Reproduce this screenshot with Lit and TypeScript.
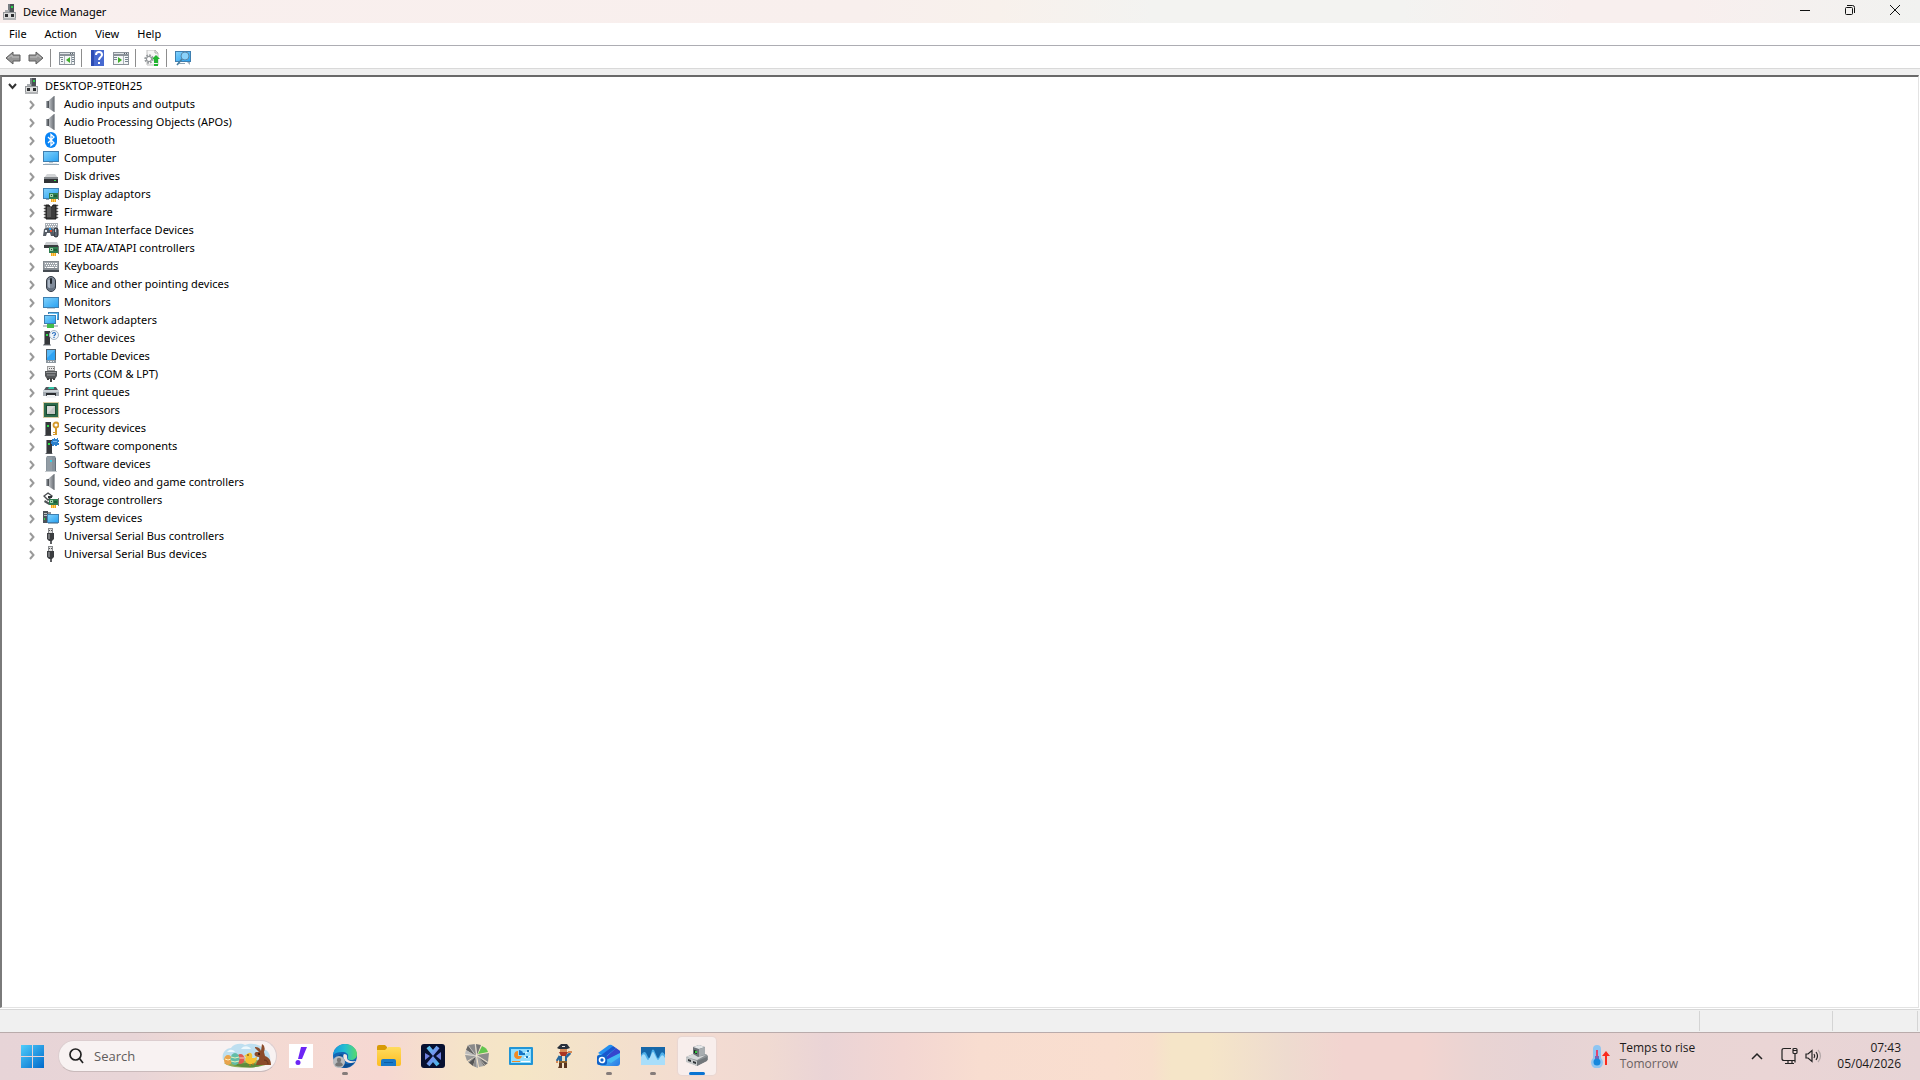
import { LitElement, html, css, svg, TemplateResult } from "lit";
import { customElement, state } from "lit/decorators.js";

const monitor = (x: number, y: number, w: number, h: number) => svg`
  <rect x=${x} y=${y} width=${w} height=${h} fill="#3f7fb0"/>
  <rect x=${x + 1} y=${y + 1} width=${w - 2} height=${h - 2} fill="url(#screen)"/>`;

const screenDefs = svg`<defs>
  <linearGradient id="screen" x1="0" y1="0" x2="1" y2="1"><stop offset="0" stop-color="#7fd0fb"/><stop offset="1" stop-color="#2ba3f2"/></linearGradient>
  <linearGradient id="metal" x1="0" y1="0" x2="1" y2="0"><stop offset="0" stop-color="#c9ccd0"/><stop offset="1" stop-color="#6d7278"/></linearGradient>
</defs>`;

const tower = svg`
  <path d="M3 1h6v13H3z" fill="#36383b"/><path d="M3 1h1v13H3z" fill="#8d9094"/>
  <path d="M2 14h8v2H2z" fill="#b9bcc0"/><path d="M3 14h6v1H3z" fill="#54575b"/>
  <path d="M5 4h2v2H5z" fill="#2fe04a"/>`;

const board = svg`
  <path d="M6 7h9v6H6z" fill="#2f7d4f"/><path d="M7 8h3v3H7z" fill="#9fd0aa"/><path d="M8 9h1v1H8z" fill="#1c4c30"/>
  <path d="M11 9h3v2h-3z" fill="#1f5c39"/><path d="M15 6h1v8h-1z" fill="#777"/><path d="M8 13h5v3H8z" fill="#f0a21c"/><path d="M9 13h1v3H9zM11 13h1v3h-1z" fill="#ffd25e"/>`;

const speaker = svg`
  <path d="M3 5h3v7H3z" fill="#6d7176"/><path d="M3 5h1v7H3z" fill="#a4a9ae"/>
  <path d="M5 5l6-5v16l-6-4z" fill="url(#metal)"/><path d="M5 5h1v7H5z" fill="#4f5459"/><path d="M11 0h1v16h-1z" fill="#a3a7ab"/>`;

const usb = svg`
  <path d="M5 0h5v6H5z" fill="#8b8d90"/><path d="M6 1h3v4H6z" fill="#dcdcdc"/><path d="M6 2h1v1H6zM8 2h1v1H8z" fill="#555"/>
  <path d="M4 5h7v6l-2 2H6l-2-2z" fill="#3b3d40"/><path d="M5 6h2v5H5z" fill="#77797c"/><path d="M7 13h2v3H7z" fill="#5d5f62"/>`;

const deviceGlyph = svg`
  <path d="M6 0h6v9H6z" fill="#4b5055"/><path d="M6 0h2v9H6z" fill="#777d82"/><path d="M9 2h2v2H9z" fill="#2bd24b"/>
  <path d="M3 6h4v3H3z" fill="#a9adb0"/><path d="M1 8h13v8H1z" fill="#95989b"/><path d="M2 9h11v5H2z" fill="#dcdddd"/>
  <path d="M3 10h3v3H3zM9 10h3v3H9z" fill="#2c2e30"/><path d="M1 14h13v2H1z" fill="#b2b4b6"/>`;

const glyphs: Record<string, TemplateResult | ReturnType<typeof svg>> = {
  root: deviceGlyph,
  speaker,
  bluetooth: svg`<rect x="2" y="0" width="12" height="16" rx="6" fill="#0a84f5"/>
    <path d="M5 5l6 6-3 2.5V2.5L11 5l-6 6" fill="none" stroke="#fff" stroke-width="1.3"/>`,
  computer: svg`${monitor(0, 1, 16, 11)}<path d="M6 12h4v1H6z" fill="#bcc8d1"/><path d="M2 13h12v1H2z" fill="#e2e8ed"/><path d="M0 14h16v1H0z" fill="#8fa5b5"/>`,
  disk: svg`<path d="M4 6h8l3 4H1z" fill="#d3d5d7"/><path d="M1 10h14v5H1z" fill="#303336"/><path d="M1 9h14v2H1z" fill="#85898d"/><path d="M11 12h2v1h-2z" fill="#2fe04a"/>`,
  display: svg`${monitor(0, 2, 16, 11)}<path d="M3 13h3v1H3z" fill="#8fa5b5"/>${board}`,
  firmware: svg`<path d="M1 1h2v1H1zM1 4h2v1H1zM1 7h2v1H1zM1 10h2v1H1zM1 13h2v1H1zM13 1h2v1h-2zM13 4h2v1h-2zM13 7h2v1h-2zM13 10h2v1h-2zM13 13h2v1h-2z" fill="#222" stroke="#777" stroke-width=".6"/>
    <path d="M3 1h3l1 2h2l1-2h3v14H3z" fill="#3c3c3c" stroke="#191919"/><path d="M4 3h4v10H4z" fill="#5b5b5b"/>`,
  hid: svg`<path d="M2 1h13v8H2z" fill="#a9afb5"/><path d="M3 2h1v1H3zM5 2h1v1H5zM7 2h1v1H7zM9 2h1v1H9zM11 2h1v1h-1zM13 2h1v1h-1zM4 4h1v1H4zM6 4h1v1H6zM8 4h1v1H8zM10 4h1v1h-1zM12 4h1v1h-1z" fill="#fff"/>
    <path d="M1 7l2-1h5l2 1 1 7H8l-1-3H4l-1 3H0z" fill="#555c65"/><path d="M2 8h2v2H2z" fill="#e9eef4"/><path d="M7 8h2v2H7z" fill="#e04b32"/><path d="M6 6h2v2H6z" fill="#2d9df0"/>
    <rect x="11" y="6" width="4" height="9" rx="2" fill="#5c6672" stroke="#24292f"/><path d="M12 7h1v3h-1z" fill="#c7d0d9"/>`,
  ide: svg`<path d="M3 2h11l2 4H1z" fill="#c9cccf"/><path d="M1 5h14v3H1z" fill="#3a3d40"/>${board}`,
  keyboard: svg`<path d="M0 3h16v9H0z" fill="#868c92"/><path d="M1 4h14v6H1z" fill="#a1a7ad"/><path d="M0 12h16v2H0z" fill="#454b51"/>
    <path d="M2 5h1v1H2zM4 5h1v1H4zM6 5h1v1H6zM8 5h1v1H8zM10 5h1v1h-1zM12 5h2v1h-2zM3 7h1v1H3zM5 7h1v1H5zM7 7h1v1H7zM9 7h1v1H9zM11 7h1v1h-1zM13 7h1v1h-1zM2 9h1v1H2zM4 9h7v1H4zM12 9h2v1h-2z" fill="#fff"/>`,
  mouse: svg`<rect x="3.5" y=".5" width="9" height="15" rx="4.5" fill="#7f8a99" stroke="#333a43"/><path d="M5 4h2v8H5z" fill="#aab5c3"/><rect x="7" y="2" width="2" height="6" rx="1" fill="#22272e"/><path d="M4 10c2 3 6 3 8 0v2l-2 3H6l-2-3z" fill="#667180"/>`,
  monitor: svg`${monitor(0, 3, 16, 11)}<path d="M4 14h8v1H4z" fill="#c2cdd6"/>`,
  network: svg`${monitor(5, 0, 11, 8)}<path d="M0 2h14v10H0z" fill="#fff"/>${monitor(1, 3, 12, 9)}<path d="M6 12h4v1H6z" fill="#5fcf5f"/><path d="M0 13h15v2H0z" fill="#c2c6c9"/><path d="M4 12h7v4H4z" fill="#43bb4a"/>`,
  other: svg`<g transform="translate(-2 0)">${tower}</g><circle cx="11" cy="5" r="4.5" fill="#eef4f9" stroke="#a6b6c4"/>
    <path d="M9.5 4c0-2 3-2 3 0 0 1-1.5 1-1.5 2.3M11 7v1" fill="none" stroke="#2a6fc0" stroke-width="1.2"/>`,
  portable: svg`<path d="M3 1h10v14H3z" fill="#54606a"/><path d="M4 2h8v10H4z" fill="#2fa3f4"/><path d="M4 2h8L4 10z" fill="#58b9f8"/><path d="M3 12h10v3H3z" fill="#8d979f"/><path d="M5 13h1v1H5zM7 13h2v1H7zM10 13h1v1h-1z" fill="#e8edf0"/>`,
  port: svg`<path d="M4 0h8v5H4z" fill="#9b9b9b"/><path d="M5 1h6v3H5z" fill="#e7e7e7"/><path d="M6 2h1v1H6zM8 2h1v1H8zM10 2h1v1h-1z" fill="#666"/><path d="M2 5h12v5l-2 3H4l-2-3z" fill="#555759"/><path d="M3 6h10v1H3z" fill="#929496"/><path d="M4 8h8v2H4z" fill="#77797b"/><path d="M4 12h2v2H4zM10 12h2v2h-2zM7 12h2v4H7z" fill="#444"/>`,
  printer: svg`<path d="M3 3h10l2 3H1z" fill="#52575d"/><path d="M6 3h5v2H5z" fill="#35c6a7"/><path d="M0 6h16v6H0z" fill="#a5acb3"/><path d="M0 6h16v2H0z" fill="#cdd3d8"/><path d="M3 9h10v3H3z" fill="#292c30"/><path d="M4 11h8l1 3H3z" fill="#f1f3f5"/>`,
  processor: svg`<rect x=".5" y=".5" width="15" height="15" fill="none" stroke="#b59a4a" stroke-dasharray="1 1"/><path d="M1 1h14v14H1z" fill="#2d6a4b"/><path d="M3 3h10v10H3z" fill="#194a31"/><path d="M4 4h8v8H4z" fill="#d7dad8"/><path d="M4 12l8-8v8z" fill="#c1c6c3"/>`,
  security: svg`<g transform="translate(-1 1)">${tower}</g><circle cx="13" cy="5" r="2.5" fill="none" stroke="#d59a2c" stroke-width="1.8"/><path d="M12 7h2v8h-2zM10 12h2v1h-2zM10 14h2v1h-2z" fill="#d59a2c"/>`,
  component: svg`<g transform="translate(0 1)">${tower}</g><path d="M9 1h2V0h1v1h2V0h1v2h1v2h-1v1h1v2h-2v1h-2V7h-1v1H9V6H8V3h1z" fill="#2c80cc"/><path d="M10 3h4v1h-4z" fill="#79b7ee"/>`,
  software: svg`<path d="M4 0h8l1 2v13H3V2z" fill="#87929b"/><path d="M4 1h5v14H4z" fill="#939da5"/><path d="M12 2h1v13h-1z" fill="#66717a"/><path d="M7 4h2v2H7z" fill="#35cfe8"/><path d="M2 15h12v1H2z" fill="#c4c9cd"/>`,
  storage: svg`<path d="M5 1l4 3-4 4-4-4z" fill="#fff" stroke="#4a4d50" stroke-width="1.4"/><path d="M5 4h4v2H5z" fill="#2f3235"/><path d="M2 8l5 3-1 2-5-3z" fill="#4f5356"/>${board}`,
  system: svg`<path d="M0 1h5v12H0z" fill="#4d5359"/><path d="M5 2h3v3H5z" fill="#8b9299"/><path d="M1 3h3v1H1zM1 5h3v1H1z" fill="#bcc2c7"/><path d="M1 8h1v2H1z" fill="#2fe04a"/>${monitor(4, 4, 12, 9)}<path d="M5 13h10v1H5z" fill="#9eb0bd"/>`,
  usb,
};

const panelWindow = svg`<path d="M0 2h16v13H0z" fill="#8b9299"/><path d="M1 3h14v1H1z" fill="#dfe3e6"/><path d="M1 6h14v8H1z" fill="#f4f6f7"/><path d="M11 3h1v1h-1zM13 3h1v1h-1z" fill="#57616a"/>`;

const tools: Record<string, ReturnType<typeof svg>> = {
  back: svg`<path d="M1 8l7-6v3h7v6H8v3z" fill="#969696" stroke="#5e5e5e"/><path d="M3 8l4-3v2h7" fill="none" stroke="#bdbdbd"/>`,
  forward: svg`<path d="M15 8L8 2v3H1v6h7v3z" fill="#969696" stroke="#5e5e5e"/><path d="M2 7h7V5l4 3" fill="none" stroke="#bdbdbd"/>`,
  tree: svg`${panelWindow}<path d="M5 6h1v8H5zM12 6h1v8h-1z" fill="#aab2b8"/><path d="M1 7h3v1H1zM2 9h2v1H2zM2 11h2v1H2zM13 7h2v1h-2zM13 9h2v1h-2zM13 11h2v1h-2z" fill="#778590"/><path d="M11 7v6L7 10z" fill="#3fae2a"/>`,
  help: svg`<path d="M1 0h13v16H1z" fill="#2c4cb3"/><path d="M4 0h10v16H4z" fill="#4669d0"/><path d="M6 5c0-4 6-4 6 0 0 2-3 2-3 5" fill="none" stroke="#fff" stroke-width="2"/><path d="M8 12h2v2H8z" fill="#fff"/>`,
  pane: svg`${panelWindow}<path d="M10 6h1v8h-1z" fill="#aab2b8"/><path d="M1 7h3v1H1zM1 9h3v1H1zM12 7h3v1h-3zM12 9h3v1h-3zM12 11h3v1h-3z" fill="#778590"/><path d="M5 7v6l4-3z" fill="#3fae2a"/>`,
  scan: svg`<path d="M3 0h8l3 3v12H3z" fill="#f7f7f7" stroke="#c2c2c2"/><path d="M11 0v3h3" fill="none" stroke="#adadad"/><circle cx="5" cy="9" r="3.5" fill="none" stroke="#9a9ea1" stroke-width="2.4" stroke-dasharray="1.7 1"/><circle cx="5" cy="9" r="2.5" fill="#fff" stroke="#868a8d"/><path d="M12 5l4 4h-2v4h-4V9H8z" fill="#22b531"/><path d="M10 14h4v2h-4z" fill="#22b531"/>`,
  hardware: svg`${monitor(0, 1, 16, 11)}<path d="M3 13h7v1H3z" fill="#8fa5b5"/><circle cx="10" cy="6" r="4" fill="#8ad2fa" stroke="#5b88a8"/><path d="M7 9l-5 6" stroke="#477da0" stroke-width="1.6"/><path d="M12 12h3v3z" fill="#9cb0bf"/>`,
};

interface TaskApp { name: string; art: ReturnType<typeof svg>; running?: boolean; active?: boolean; }

const apps: TaskApp[] = [
  { name: "Yahoo", art: svg`<path d="M0 0h24v24H0z" fill="#fff"/><path d="M12 3h6l-5 12H9z" fill="#6d25f5"/><circle cx="9" cy="18.500" r="2.500" fill="#6d25f5"/>` },
  { name: "Microsoft Edge", running: true, art: svg`<defs><linearGradient id="edgeTop" x1="0" x2="1"><stop offset="0" stop-color="#1696df"/><stop offset=".5" stop-color="#25bed0"/><stop offset="1" stop-color="#57da6a"/></linearGradient></defs>
    <circle cx="12" cy="12" r="12" fill="#1465b4"/><path d="M0 11C1 4 6 0 12 0c7 0 12 5 12 10 0 4-3 6-6 6-3 0-4-1-3-3 1-3-2-5-6-5-4 0-7 1-9 3z" fill="url(#edgeTop)"/>
    <path d="M10 11c-3 4 0 9 5 9 3 0 5-1 7-3-3 6-9 8-14 6-4-2-6-8-3-11 2-2 4-2 5-1z" fill="#0c4d91"/><path d="M11 10c4 0 3 3 3 4 0 2 3 4 9 3l-1 1c-4 2-9 1-11-3-1-2-1-4 0-5z" fill="#f6e7e2"/>
    <circle cx="6" cy="18" r="6" fill="#b9bcc0"/><circle cx="6" cy="16" r="2.200" fill="#777"/><path d="M2 21c1-4 7-4 8 0-2 2-6 2-8 0z" fill="#777"/>` },
  { name: "File Explorer", art: svg`<defs><linearGradient id="folder" x2="0" y2="1"><stop offset="0" stop-color="#ffdc5e"/><stop offset="1" stop-color="#fdbd22"/></linearGradient></defs><path d="M0 3q0-2 2-2h6l2 2v5H0z" fill="#d89a06"/><path d="M0 6h8l3-3h11q2 0 2 2v15q0 2-2 2H2q-2 0-2-2z" fill="url(#folder)"/><path d="M4 22v-5q0-2 2-2h11q2 0 2 2v5z" fill="#1979c8"/><path d="M7 18h9v1H7z" fill="#0b5da5"/>` },
  { name: "System utility", art: svg`<defs><linearGradient id="neon" gradientUnits="userSpaceOnUse" x1="4" y1="4" x2="20" y2="20"><stop offset="0" stop-color="#52cfee"/><stop offset=".5" stop-color="#7a8cee"/><stop offset="1" stop-color="#40c3e7"/></linearGradient></defs><rect width="24" height="24" rx="3" fill="#071031"/>
    <path d="M7 3l5 6 5-6" fill="none" stroke="url(#neon)" stroke-width="4"/><path d="M7 21l5-6 5 6" fill="none" stroke="url(#neon)" stroke-width="4"/><path d="M4 9l5 3-5 4zM20 8l-5 4 5 4z" fill="#6f7fdf"/>` },
  { name: "Disk usage", art: svg`<path d="M11 12L3 1l7-1z" fill="#8a8a8a"/><path d="M11 12L1 6l2-5z" fill="#666"/><path d="M11 12L0 10l1-4z" fill="#bbb"/><path d="M11 12L2 17l-2-6z" fill="#999"/><path d="M11 12L8 22l-5-4z" fill="#555"/><path d="M11 12l2 12-5-2z" fill="#8b8b8b"/><path d="M12 12l7 10-5 1z" fill="#a5a5a5"/><path d="M12 12l11 7-4 3z" fill="#666"/><path d="M12 11l12-2-1 9z" fill="#8c8c8c"/><path d="M12 11L11 0l5 1z" fill="#777"/><path d="M13 10l4-8q5 2 6 6z" fill="#62c54e"/><path d="M11 12L3 1M11 12L0 10M11 12l-8 7M11 12l1 12M12 12l8 9M12 12l11 7M12 11L10 0" stroke="#ddd" stroke-width=".6"/>` },
  { name: "Control Panel", art: svg`<rect y="3" width="24" height="18" rx="1" fill="#2095d6"/><path d="M2 5h20v14H2z" fill="#93defd"/><path d="M9 7a4 4 0 1 0 4 5H9z" fill="#f08a22"/><path d="M10 6a4 4 0 0 1 4 5h-4z" fill="#1674c7"/><path d="M15 10l3-2 3-1M15 13l3 1 3-2" fill="none" stroke="#fff"/><path d="M14 9h2v2h-2zM18 6h2v2h-2zM17 12h2v2h-2z" fill="#1578ba"/><path d="M3 17h8v1H3z" fill="#f08a22"/><path d="M12 17h9v1h-9z" fill="#fff"/>` },
  { name: "Pirate", art: svg`<path d="M4 4l4-4h6l3 4-3 1H6z" fill="#29303b"/><path d="M9 2h3v1H9z" fill="#ddd"/><path d="M7 5h7v4H7z" fill="#d68a56"/><path d="M6 8h9l-2 4H8z" fill="#ab3522"/><path d="M6 12h8v6H6z" fill="#23669f"/><path d="M9 12h3v5H9z" fill="#e8dfc5"/><path d="M13 11l4-3 1 2-4 4zM6 11l-3 5 1 2 3-4z" fill="#28679c"/><path d="M15 7h4v2h-4zM3 17h2v2H3z" fill="#d68a56"/><path d="M6 17h8v2H6z" fill="#8b612c"/><path d="M6 19h3v5H5l1-2zM11 19h3v5h-3z" fill="#593520"/>` },
  { name: "Outlook", running: true, art: svg`<defs><linearGradient id="mail" x2="1" y2="1"><stop offset="0" stop-color="#71e1fb"/><stop offset="1" stop-color="#2678e4"/></linearGradient></defs><path d="M2 10L14 1l9 6v12q0 3-3 3H5q-3 0-3-3z" fill="url(#mail)"/><path d="M1 9L12 1q2-1 4 1L5 11z" fill="#238ff0"/><path d="M3 12L16 2l3 2L6 15z" fill="#1957cf"/><path d="M7 15L19 4l4 3v4l-13 6z" fill="#3546ce"/><path d="M9 16l14-7v4l-9 6z" fill="#43b9f3"/><rect y="11" width="10" height="10" rx="2" fill="#1062c8"/><circle cx="5" cy="16" r="2.500" fill="none" stroke="#fff" stroke-width="1.700"/>` },
  { name: "Performance monitor", running: true, art: svg`<path d="M0 3h24v18H0z" fill="#a9defa"/><path d="M0 3h24v11q-2-4-4-2l-2 3q-1 2-2 0l-3-6q-1-2-2 0l-3 6q-1 2-2 0L4 11q-2-2-4 2z" fill="#4fb0ea"/><path d="M0 3h24v8q-2-4-4-2l-2 4q-1 2-2 0l-3-7q-1-1-2 0l-2 7q-1 2-2 0L5 9Q3 6 0 11z" fill="#1667a9"/>` },
  { name: "Device Manager", running: true, active: true, art: svg`<path d="M8 3l6-2 6 2v10l-6 3-6-3z" fill="#6f7479"/><path d="M8 3l6-2 6 2-6 2z" fill="#e4e6e7"/><path d="M14 5l6-2v11l-6 2z" fill="#a8adb0"/><path d="M9 6l3 1v3L9 9z" fill="#17251b"/><path d="M10 7h2v2h-2z" fill="#35cc43"/><path d="M1 13l7-3 5 3 8-3 2 2v4l-11 6-11-5z" fill="#8b9093"/><path d="M1 13l7-3 5 3 8-2-9 5z" fill="#d7d9da"/><path d="M1 13l11 4v5L1 18z" fill="#c4c7c8"/><path d="M3 15l3 1v2l-3-1zM8 17l3 1v2l-3-1z" fill="#303438"/><path d="M12 17l10-4v4l-10 5z" fill="#72777b"/>` },
];

const devices: [string, string][] = [
  ["Audio inputs and outputs", "speaker"],
  ["Audio Processing Objects (APOs)", "speaker"],
  ["Bluetooth", "bluetooth"],
  ["Computer", "computer"],
  ["Disk drives", "disk"],
  ["Display adaptors", "display"],
  ["Firmware", "firmware"],
  ["Human Interface Devices", "hid"],
  ["IDE ATA/ATAPI controllers", "ide"],
  ["Keyboards", "keyboard"],
  ["Mice and other pointing devices", "mouse"],
  ["Monitors", "monitor"],
  ["Network adapters", "network"],
  ["Other devices", "other"],
  ["Portable Devices", "portable"],
  ["Ports (COM & LPT)", "port"],
  ["Print queues", "printer"],
  ["Processors", "processor"],
  ["Security devices", "security"],
  ["Software components", "component"],
  ["Software devices", "software"],
  ["Sound, video and game controllers", "speaker"],
  ["Storage controllers", "storage"],
  ["System devices", "system"],
  ["Universal Serial Bus controllers", "usb"],
  ["Universal Serial Bus devices", "usb"],
];

const icon16 = (body: unknown) => html`<svg class="icon16" viewBox="0 0 16 16" aria-hidden="true">${screenDefs}${body}</svg>`;

const reset = css`
  * { box-sizing: border-box; }
  button { margin: 0; padding: 0; border: 0; background: none; font: inherit; color: inherit; }
  svg { display: block; flex: none; }
  .icon16 { width: 16px; height: 16px; }
`;

@customElement("window-header")
export class WindowHeader extends LitElement {
  static styles = [reset, css`
    :host { display: block; }
    .titlebar { display: flex; align-items: center; height: 23px; padding: 0 3px 0 2px; background: linear-gradient(90deg, #f9efee 0%, #f8efed 45%, #f8f1ec 52%, #f3f3f1 60%, #f3f3f1 73%, #f8efee 82%, #f8efee 88%, #f1f2f0 100%); }
    .title { flex: 1; margin: 0; padding-left: 5px; font-size: 11px; line-height: 23px; font-weight: 400; }
    .control { width: 45px; height: 20px; display: grid; place-items: center; align-self: flex-start; }
    .control svg { width: 12px; height: 12px; fill: none; stroke: #111; }
    .menus { display: flex; height: 22px; }
    .menu { padding: 0 9px; line-height: 22px; }
    .toolbar { display: flex; align-items: center; height: 24px; padding: 1px 0 0 5px; border-top: 1px solid #adadb3; border-bottom: 1px solid #d9d9d9; }
    .tool + .tool { margin-left: 7px; }
    .divider { width: 1px; height: 18px; margin: 0 8px 0 6px; background: #8d8d8d; }
  `];

  tool(id: string, label: string) {
    return html`<button class="tool" title=${label} aria-label=${label}>${icon16(tools[id])}</button>`;
  }

  render() {
    return html`
      <header class="titlebar">
        ${icon16(deviceGlyph)}
        <h1 class="title">Device Manager</h1>
        <button class="control" aria-label="Minimise"><svg viewBox="0 0 12 12"><path d="M1 6.500h10"/></svg></button>
        <button class="control" aria-label="Restore"><svg viewBox="0 0 12 12"><rect x="1.500" y="3.500" width="7" height="7" rx="1"/><path d="M3 1.500h5.500q2 0 2 2V9"/></svg></button>
        <button class="control" aria-label="Close"><svg viewBox="0 0 12 12"><path d="M1 1l10 10M11 1L1 11"/></svg></button>
      </header>
      <nav class="menus" aria-label="Menu bar">
        ${["File", "Action", "View", "Help"].map((name) => html`<button class="menu">${name}</button>`)}
      </nav>
      <div class="toolbar" role="toolbar" aria-label="Tools">
        ${this.tool("back", "Back")}${this.tool("forward", "Forward")}
        <span class="divider"></span>${this.tool("tree", "Show/hide console tree")}
        <span class="divider"></span>${this.tool("help", "Help")}${this.tool("pane", "Show/hide action pane")}
        <span class="divider"></span>${this.tool("scan", "Update driver")}
        <span class="divider"></span>${this.tool("hardware", "Scan for hardware changes")}
      </div>`;
  }
}

@customElement("device-tree")
export class DeviceTree extends LitElement {
  @state() private open = true;

  static styles = [reset, css`
    :host { display: block; background: #fff; border: 2px solid; border-color: #696969 #e3e3e3 #e3e3e3 #7a7a7a; border-right-width: 1px; border-bottom-width: 1px; overflow: auto; }
    ul { list-style: none; margin: 0; padding: 0; }
    .row { display: flex; align-items: center; height: 18px; line-height: 18px; white-space: nowrap; }
    .root { padding-left: 3px; }
    .child { padding-left: 22px; }
    .toggle { width: 15px; height: 18px; display: grid; place-items: center; margin-right: 4px; }
    .toggle svg { width: 9px; height: 12px; fill: none; stroke: #9a9a9a; stroke-width: 2; }
    .root .toggle svg { stroke: #333; }
    .name { padding-left: 5px; }
  `];

  render() {
    return html`<ul role="tree" aria-label="Devices">
      <li role="treeitem" aria-expanded=${this.open}>
        <div class="row root">
          <button class="toggle" aria-label="Toggle computer" @click=${() => (this.open = !this.open)}><svg viewBox="0 0 9 12"><path d=${this.open ? "M1 4l3.500 4L8 4" : "M3 3l3.500 4L3 11"}/></svg></button>
          ${icon16(glyphs.root)}<span class="name">DESKTOP-9TE0H25</span>
        </div>
        ${this.open ? html`<ul role="group">${devices.map(([name, glyph]) => html`
          <li class="row child" role="treeitem" aria-expanded="false">
            <button class="toggle" aria-label=${"Expand " + name}><svg viewBox="0 0 9 12"><path d="M3 3l3.500 4L3 11"/></svg></button>
            ${icon16(glyphs[glyph])}<span class="name">${name}</span>
          </li>`)}</ul>` : ""}
      </li>
    </ul>`;
  }
}

@customElement("task-bar")
export class TaskBar extends LitElement {
  static styles = [reset, css`
    :host { display: flex; box-sizing: border-box; align-items: stretch; height: 48px; padding: 0 19px 1px 0; border-top: 1px solid #b9abab; color: #1c1a1a; font-family: "Open Sans", "Noto Sans", sans-serif;
      background: linear-gradient(90deg, #e7d4d7 0%, #e8d5d7 7%, #f3dad3 12%, #f6d8d2 20%, #f5e3c9 24%, #f5e6c6 27%, #f3dfcd 33%, #f3dbd2 37%, #f0dad2 40%, #ead4d6 43%, #f3d6d2 47%, #f8ddd0 51%, #f9decf 58%, #f8dfcd 60%, #f5e5c8 61%, #f5e5c8 63%, #eedbcf 67%, #f2d4d0 70%, #f2d4d0 74%, #e9d4d3 77%, #e6d3d5 80%, #e9d5d4 85%, #ead5d5 92%, #e7d4d6 100%); }
    .start { width: 36px; margin: 0 8px 0 14px; display: grid; place-items: center; }
    .search { display: flex; align-items: center; align-self: center; width: 219px; height: 32px; margin-right: 5px; padding: 0 4px 0 10px; border: 1px solid #dccdcf; border-bottom-color: #c9babb; border-radius: 16px; background: #f8f2f2; }
    .query { flex: 1; min-width: 0; margin-left: 10px; padding: 0; border: 0; outline: 0; background: none; font: inherit; font-size: 13px; color: #333; }
    .query::placeholder { color: #5f5c5c; opacity: 1; }
    .apps { display: flex; align-items: center; gap: 6px; }
    .app { position: relative; width: 38px; height: 38px; display: grid; place-items: center; border-radius: 4px; }
    .active { background: #f8eeec; box-shadow: 0 0 1px 1px #e8d6d2; }
    .running::after { content: ""; position: absolute; left: 16px; bottom: 0; width: 6px; height: 3px; border-radius: 2px; background: #857c7a; }
    .active::after { left: 11px; width: 16px; background: #0a73d2; }
    .gap { flex: 1; }
    .weather { display: flex; align-items: center; gap: 10px; margin-right: 56px; text-align: left; }
    .lines { display: grid; line-height: 16px; font-size: 12px; }
    .muted { color: #6a6162; }
    .tray { display: flex; align-items: center; gap: 7px; margin-right: 15px; }
    .chevron { margin-right: 11px; }
    .clock { text-align: right; }
  `];

  render() {
    return html`
      <button class="start" aria-label="Start"><svg width="24" height="24" viewBox="0 0 24 24">
        <defs><linearGradient id="win" x2="1" y2="1"><stop offset="0" stop-color="#50cdfb"/><stop offset="1" stop-color="#0069cb"/></linearGradient></defs>
        <path d="M1 1h11v11H1zM13 1h11v11H13zM1 13h11v11H1zM13 13h11v11H13z" fill="url(#win)"/></svg></button>
      <label class="search">
        <svg width="15" height="16" viewBox="0 0 15 16" fill="none" stroke="#222" stroke-width="1.700"><circle cx="6.500" cy="6.500" r="5.500"/><path d="M10.500 10.500L14 15"/></svg>
        <input class="query" type="search" placeholder="Search" aria-label="Search">
        <svg width="50" height="26" viewBox="0 0 50 26">
          <path d="M1 17C-1 9 5 5 9 5c3-5 11-5 14-3 7-3 17 0 18 4 6 1 8 7 7 13z" fill="#bedff0"/><path d="M5 9c3-4 7-2 8 0zM19 6c3-4 8-3 10 0z" fill="#eef8fc"/>
          <path d="M2 20q10-6 23-2 12-3 22 2c-4 5-39 7-45 0z" fill="#8fae58"/><path d="M11 22q14-4 29 0-10 5-29 0z" fill="#5e8c3d"/>
          <ellipse cx="6" cy="17" rx="4" ry="5" fill="#e9a44d"/><path d="M3 16q3 2 6 0" stroke="#fff1c0" fill="none"/>
          <ellipse cx="18.500" cy="16" rx="4" ry="5" fill="#e05d55"/><path d="M15 15h7" stroke="#ffd3bc"/>
          <ellipse cx="13" cy="16" rx="4.500" ry="6" fill="#62bda8"/><path d="M9 14q4 2 8 0M9 18q4 2 8 0" stroke="#e6f2bd" fill="none"/>
          <path d="M25 11c4-3 6 0 5 4 3 0 5-1 5-1 0 5-3 7-7 7s-6-4-4-7l-2-1z" fill="#f5c335"/><circle cx="26" cy="12" r=".8" fill="#4a2b12"/><path d="M28 21v2M31 20v2" stroke="#d7761e"/>
          <path d="M37 9L33 5v-1q5 0 6 4l1-7q4 2 2 8l1 4c5 2 6 5 6 9H34c1-5 4-5 3-8-4 0-6-3-3-5z" fill="#8c4c2b"/><circle cx="37" cy="11" r=".9" fill="#211"/><path d="M42 17c3 0 4 2 4 4" fill="none" stroke="#65331d"/>
        </svg>
      </label>
      <nav class="apps" aria-label="Pinned applications">
        ${apps.map((app) => html`<button class="app ${app.running ? "running" : ""} ${app.active ? "active" : ""}" aria-label=${app.name}><svg width="24" height="24" viewBox="0 0 24 24">${app.art}</svg></button>`)}
      </nav>
      <span class="gap"></span>
      <button class="weather">
        <svg width="19" height="24" viewBox="0 0 19 24"><path d="M2 5a4 4 0 0 1 8 0v9a6 6 0 1 1-8 0z" fill="#8ec5f2"/><path d="M5 6h2v11H5z" fill="#e04470"/><path d="M4 12h4v3H4z" fill="#7d63b5"/><circle cx="6" cy="18" r="3.500" fill="#1787dc"/><path d="M15 7l4 5h-3v9h-2v-9h-3z" fill="#fa2b1d"/></svg>
        <span class="lines"><span>Temps to rise</span><span class="muted">Tomorrow</span></span>
      </button>
      <div class="tray">
        <button class="chevron" aria-label="Show hidden icons"><svg width="12" height="8" viewBox="0 0 12 8" fill="none" stroke="#222" stroke-width="1.500"><path d="M1 7l5-5 5 5"/></svg></button>
        <button aria-label="Network"><svg width="17" height="18" viewBox="0 0 17 18" fill="none" stroke="#222" stroke-width="1.200"><path d="M10 1.500H3q-2 0-2 2v8q0 2 2 2h11M7 13.500v3M11 13.500v3M4 16.500h9"/><rect x="12" y="1.500" width="4" height="5" rx="1"/><path d="M14 6.500v9M12 3.500h4"/></svg></button>
        <button aria-label="Volume"><svg width="17" height="16" viewBox="0 0 17 16" fill="none" stroke="#222" stroke-width="1.200"><path d="M1 6h2l4-3.500v11L3 10H1z"/><path d="M9 6q1.500 2 0 4M11 4q3 4 0 8"/><path d="M13 2q5 6 0 12" stroke="#b5a9aa"/></svg></button>
      </div>
      <button class="clock"><span class="lines"><time>07:43</time><time>05/04/2026</time></span></button>`;
  }
}

@customElement("app-root")
export class AppRoot extends LitElement {
  static styles = css`
    :host { display: flex; flex-direction: column; height: 100vh; min-height: 600px; overflow: hidden; background: #fff; color: #000; font: 11px "Noto Sans", "Open Sans", sans-serif; }
    window-header { flex: none; }
    .workspace { flex: 1; min-height: 0; display: flex; padding: 6px 1px 1px 0; background: linear-gradient(#f0f0f0 0 6px, #fff 6px); }
    device-tree { flex: 1; }
    .status { display: grid; box-sizing: border-box; grid-template-columns: 1fr 133px 85px 2px; height: 23px; padding: 1px 0; border-top: 1px solid #d7d7d7; background: #f0f0f0; }
    .cell { border-right: 1px solid #d4d4d4; }
    task-bar { flex: none; }
  `;

  render() {
    return html`
      <window-header></window-header>
      <main class="workspace"><device-tree></device-tree></main>
      <footer class="status"><span class="cell"></span><span class="cell"></span><span class="cell"></span></footer>
      <task-bar></task-bar>`;
  }
}
